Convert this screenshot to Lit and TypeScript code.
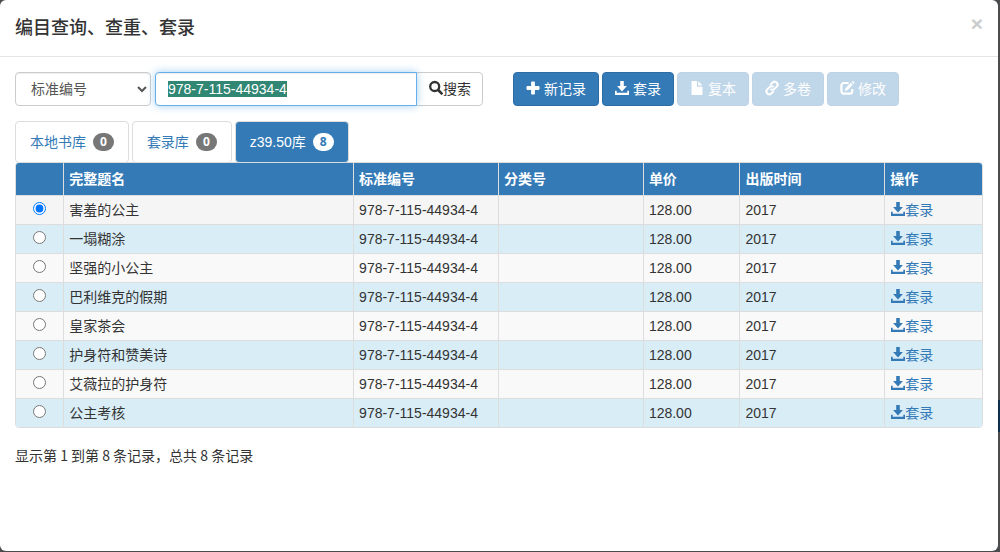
import { LitElement, html, css, svg } from "lit";
import { customElement, property, state } from "lit/decorators.js";

type IconName = "plus" | "download" | "file" | "link" | "edit" | "search";

const shapes: Record<IconName, unknown> = {
  plus: svg`<path d="M5.900.6h2.200q.8 0 .8.8v3.700h3.800q.8 0 .8.8v2.200q0 .8-.8.8H8.900v3.800q0 .8-.8.8H5.900q-.8 0-.8-.8V8.900H1.300q-.8 0-.8-.8V5.900q0-.8.8-.8h3.800V1.400q0-.8.8-.8z" />`,
  download: svg`<path d="M5.200 0h3.600v4.900h3.100L7 10.500 2.100 4.900h3.100z" /><path d="M0 9.700h1.700v2.100h10.600V9.700H14V14H0z" />`,
  file: svg`<path d="M1.500 0H7v5.800h5.500V14h-11z" /><path d="M8.200 0l4.300 4.600H8.200z" />`,
  link: svg`<g transform="rotate(-42 7 7)" fill="none" stroke="currentColor" stroke-width="2" stroke-linecap="round">
    <path d="M5.300 7.500C5.900 8.700 6.800 9.200 8 9.200h3.200a2.900 2.900 0 0 0 0-5.800H8.400" />
    <path d="M8.700 6.500C8.100 5.300 7.200 4.800 6 4.800H2.800a2.900 2.900 0 0 0 0 5.800h2.800" />
  </g>`,
  edit: svg`<path fill="none" stroke="currentColor" stroke-width="2.200" d="M8.600 2H3.800A2.400 2.400 0 0 0 1.400 4.400v5.800A2.400 2.400 0 0 0 3.800 12.600h6a2.400 2.400 0 0 0 2.400-2.400V8" />
    <path d="M10.700 1.700l2.100 2.100-5.100 5.300-3 .9.900-3.100zM11.500.9l.6-.6q.5-.5 1 0l1.100 1.100q.5.500 0 1l-.6.600z" />`,
  search: svg`<circle cx="5.700" cy="5.500" r="4.500" fill="none" stroke="currentColor" stroke-width="2.300" />
    <path d="M8 9.700l1.900-1.900 4 4.200q.4.400 0 .8l-.9 1q-.4.400-.9 0z" />`,
};

@customElement("glyph-icon")
class GlyphIcon extends LitElement {
  @property() name: IconName = "plus";
  static styles = css`
    :host {
      display: inline-block;
      width: 14px;
      height: 14px;
      margin-bottom: 2px;
    }
    svg {
      display: block;
      overflow: visible;
      fill: currentColor;
    }
  `;
  render() {
    return html`<svg width="14" height="14" viewBox="0 0 14 14" aria-hidden="true">${shapes[this.name]}</svg>`;
  }
}

const titles = ["害羞的公主", "一塌糊涂", "坚强的小公主", "巴利维克的假期", "皇家茶会", "护身符和赞美诗", "艾薇拉的护身符", "公主考核"];

const actions: { icon: IconName; label: string; disabled: boolean }[] = [
  { icon: "plus", label: "新记录", disabled: false },
  { icon: "download", label: "套录", disabled: false },
  { icon: "file", label: "复本", disabled: true },
  { icon: "link", label: "多卷", disabled: true },
  { icon: "edit", label: "修改", disabled: true },
];

const tabs = [
  { label: "本地书库", count: 0 },
  { label: "套录库", count: 0 },
  { label: "z39.50库", count: 8 },
];

@customElement("app-root")
class AppRoot extends LitElement {
  @state() private selected = 0;
  @state() private tab = 2;

  static styles = css`
    :host {
      display: block;
      min-height: 100vh;
      box-sizing: border-box;
      padding: 0 2px 1px 0;
      background: linear-gradient(#0c2f4d, #0c2f4d) right 400px / 2px 32px no-repeat, #4a4c4e;
      font: 14px/20px "Liberation Sans", "Noto Sans CJK SC", sans-serif;
      color: #333;
    }
    * {
      box-sizing: border-box;
    }
    .dialog {
      min-height: calc(100vh - 1px);
      border-radius: 6px;
      background: #fff;
    }
    header {
      display: flex;
      justify-content: space-between;
      align-items: flex-start;
      padding: 15px;
      border-bottom: 1px solid #e5e5e5;
    }
    h1 {
      margin: 0;
      font-size: 18px;
      font-weight: 500;
      line-height: 26px;
    }
    button,
    select,
    input {
      font: inherit;
    }
    .close {
      padding: 0;
      border: 0;
      background: none;
      color: #ccc;
      font-size: 21px;
      font-weight: 700;
      line-height: 18px;
    }
    main {
      padding: 15px;
    }
    .toolbar {
      display: flex;
      align-items: center;
      gap: 30px;
    }
    .query {
      display: flex;
    }
    .field {
      height: 34px;
      border: 1px solid #ccc;
      border-radius: 4px;
      background: #fff;
      color: #555;
      box-shadow: inset 0 1px 1px rgba(0, 0, 0, 0.075);
    }
    .kind {
      width: 136px;
      margin-right: 4px;
      padding: 6px 0 6px 11px;
    }
    .term {
      position: relative;
      z-index: 1;
      width: 262px;
      padding: 6px 12px;
      border-radius: 4px 0 0 4px;
      border-color: #66afe9;
      outline: 0;
      box-shadow: inset 0 1px 1px rgba(0, 0, 0, 0.075), 0 0 8px rgba(102, 175, 233, 0.6);
    }
    .term::selection {
      background: #318674;
      color: #fff;
    }
    .btn {
      display: inline-flex;
      align-items: center;
      gap: 4px;
      height: 34px;
      padding: 0 12px;
      border: 1px solid #2e6da4;
      border-radius: 4px;
      background: #337ab7;
      color: #fff;
      white-space: nowrap;
    }
    .btn:disabled {
      opacity: 0.3;
    }
    .find {
      gap: 0;
      margin-left: -1px;
      padding: 0 11px 0 12px;
      border-color: #ccc;
      border-radius: 0 4px 4px 0;
      background: #fff;
      color: #333;
    }
    .actions {
      display: flex;
      gap: 3px;
    }
    .tabs {
      display: flex;
      gap: 3px;
      margin-top: 15px;
    }
    .tab {
      display: flex;
      align-items: center;
      gap: 7px;
      height: 42px;
      padding: 0 14px;
      border: 1px solid #ddd;
      border-radius: 4px;
      background: #fff;
      color: #337ab7;
    }
    .tab.active {
      background: #337ab7;
      color: #fff;
    }
    .badge {
      min-width: 20px;
      padding: 3px 7px;
      border-radius: 10px;
      background: #777;
      color: #fff;
      font: 700 12px/12px "Noto Sans", sans-serif;
    }
    .active .badge {
      background: #fff;
      color: #337ab7;
    }
    .frame {
      border: 1px solid #ddd;
      border-radius: 4px;
      overflow: hidden;
      margin-top: -1px;
    }
    table {
      width: 100%;
      table-layout: fixed;
      border-collapse: separate;
      border-spacing: 0;
    }
    th,
    td {
      padding: 4px 5px;
      text-align: left;
      border-right: 1px solid #ddd;
      border-bottom: 1px solid #ddd;
    }
    th {
      padding: 6px 5px;
      background: #337ab7;
      color: #fff;
    }
    th:last-child,
    td:last-child {
      border-right: 0;
    }
    tbody tr:last-child td {
      border-bottom: 0;
    }
    tbody tr {
      background: #f9f9f9;
    }
    tbody tr:nth-child(even) {
      background: #d9edf7;
    }
    tbody tr.chosen {
      background: #f5f5f5;
    }
    .pick {
      width: 5%;
    }
    .title {
      width: 30%;
    }
    .wide {
      width: 15%;
    }
    .narrow {
      width: 10%;
    }
    .choice {
      padding: 0;
    }
    .choice input {
      display: block;
      width: 13px;
      height: 13px;
      margin: 0 auto 3px;
    }
    .fetch {
      display: flex;
      align-items: center;
      color: #337ab7;
      text-decoration: none;
    }
    td .fetch {
      padding-left: 1px;
    }
    .summary {
      margin: 17px 0 0;
      font-family: "Noto Sans CJK SC", sans-serif;
    }
  `;

  firstUpdated() {
    const term = this.renderRoot.querySelector<HTMLInputElement>(".term")!;
    term.focus();
    term.select();
  }

  render() {
    return html`
      <div class="dialog" role="dialog" aria-labelledby="heading">
        <header>
          <h1 id="heading">编目查询、查重、套录</h1>
          <button class="close" aria-label="关闭">×</button>
        </header>
        <main>
          <div class="toolbar">
            <div class="query">
              <select class="field kind" aria-label="检索类型"><option>标准编号</option></select>
              <input class="field term" type="text" aria-label="检索词" value="978-7-115-44934-4" />
              <button class="btn find"><glyph-icon name="search"></glyph-icon>搜索</button>
            </div>
            <div class="actions">
              ${actions.map(
                (a) => html`<button class="btn" ?disabled=${a.disabled}><glyph-icon name=${a.icon}></glyph-icon>${a.label}</button>`
              )}
            </div>
          </div>
          <div class="tabs" role="tablist">
            ${tabs.map(
              (t, i) => html`<button
                class="tab ${i === this.tab ? "active" : ""}"
                role="tab"
                aria-selected=${i === this.tab}
                @click=${() => (this.tab = i)}
              >${t.label}<span class="badge">${t.count}</span></button>`
            )}
          </div>
          <div class="frame">
            <table>
              <thead>
                <tr>
                  <th class="pick"></th>
                  <th class="title">完整题名</th>
                  <th class="wide">标准编号</th>
                  <th class="wide">分类号</th>
                  <th class="narrow">单价</th>
                  <th class="wide">出版时间</th>
                  <th class="narrow">操作</th>
                </tr>
              </thead>
              <tbody>
                ${titles.map(
                  (title, i) => html`<tr class=${i === this.selected ? "chosen" : ""}>
                    <td class="choice">
                      <input type="radio" name="record" aria-label=${title} .checked=${i === this.selected} @change=${() => (this.selected = i)} />
                    </td>
                    <td>${title}</td>
                    <td>978-7-115-44934-4</td>
                    <td></td>
                    <td>128.00</td>
                    <td>2017</td>
                    <td><a class="fetch" href="#"><glyph-icon name="download"></glyph-icon>套录</a></td>
                  </tr>`
                )}
              </tbody>
            </table>
          </div>
          <p class="summary">显示第 1 到第 8 条记录，总共 8 条记录</p>
        </main>
      </div>
    `;
  }
}
